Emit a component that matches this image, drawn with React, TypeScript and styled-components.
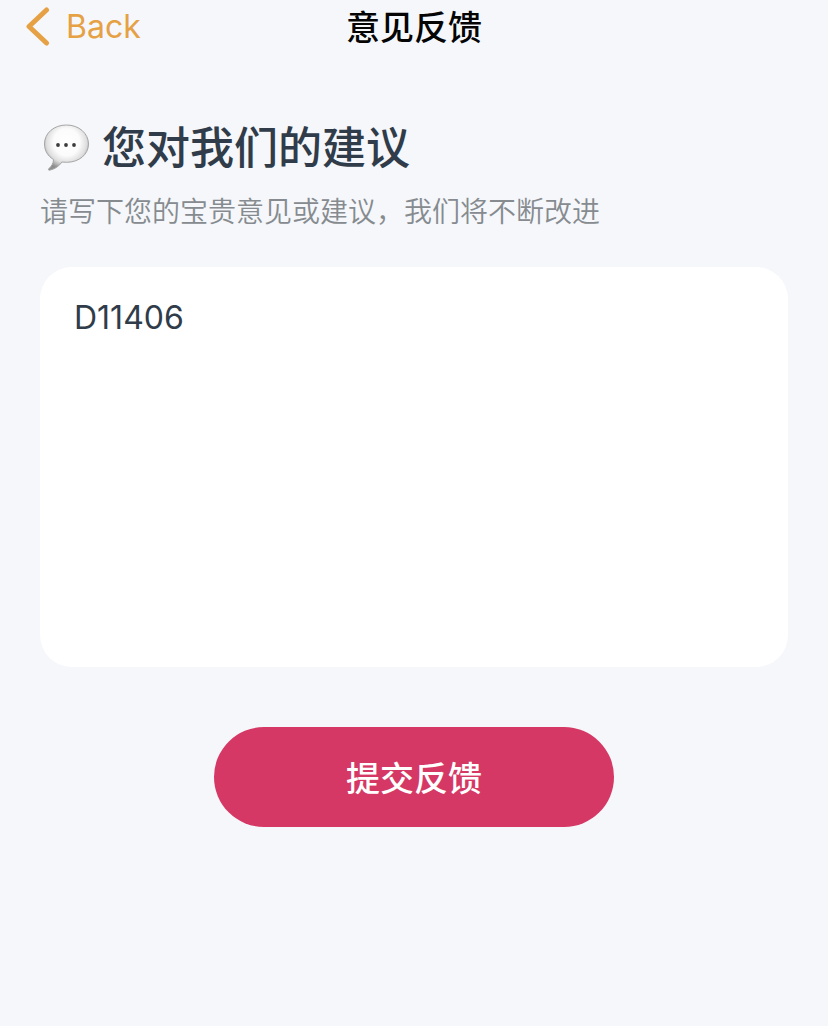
import React, { useState } from "react";
import styled, { createGlobalStyle } from "styled-components";

const GlobalStyle = createGlobalStyle`
  *, *::before, *::after { box-sizing: border-box; }
  body {
    margin: 0;
    background: #f5f7fb;
    font-family: Inter, "Noto Sans CJK SC", sans-serif;
  }
`;

const NavBar = styled.header`
  display: grid;
  grid-template-columns: 1fr auto 1fr;
  align-items: start;
  height: 54px;
  padding: 0 24px;
`;

const BackLink = styled.a`
  display: flex;
  align-items: center;
  gap: 14px;
  justify-self: start;
  color: #e5a144;
  font-size: 32px;
  line-height: 54px;
  text-decoration: none;
`;

const NavTitle = styled.h1`
  margin: 0;
  font-size: 34px;
  font-weight: 500;
  line-height: 56px;
  color: #050505;
`;

const Form = styled.form`
  display: flex;
  flex-direction: column;
  padding: 62px 40px 40px;
`;

const Heading = styled.h2`
  display: flex;
  align-items: center;
  gap: 12px;
  margin: 0;
  font-size: 44px;
  font-weight: 500;
  line-height: 64px;
  color: #303c49;
`;

const Hint = styled.p`
  margin: 10px 0 33px;
  font-size: 28px;
  font-weight: 350;
  line-height: 44px;
  color: #868b8f;
`;

const Message = styled.textarea`
  display: block;
  width: 100%;
  height: 400px;
  padding: 29px 34px;
  border: 0;
  border-radius: 32px;
  outline: none;
  resize: none;
  background: #ffffff;
  color: #303c49;
  font: inherit;
  font-size: 32px;
  line-height: 44px;
`;

const SubmitButton = styled.button`
  align-self: center;
  width: 400px;
  max-width: 100%;
  height: 100px;
  margin-top: 60px;
  padding: 0 0 2px;
  border: 0;
  border-radius: 50px;
  background: #d53864;
  color: #ffffff;
  font: inherit;
  font-size: 34px;
  font-weight: 500;
  cursor: pointer;
`;

const ChevronIcon = () => (
  <svg width="28" height="40" viewBox="0 0 28 40" fill="none" aria-hidden="true">
    <path
      d="M22.5 3 5 19.500l17.500 16.500"
      stroke="currentColor"
      strokeWidth="5"
      strokeLinecap="round"
      strokeLinejoin="round"
    />
  </svg>
);

const SpeechBubbleIcon = () => (
  <svg width="50" height="50" viewBox="0 0 50 50" aria-hidden="true">
    <defs>
      <radialGradient id="bubble" cx="0.5" cy="0.38" r="0.6">
        <stop offset="0" stopColor="#ffffff" />
        <stop offset="0.5" stopColor="#fbfbfb" />
        <stop offset="0.76" stopColor="#dedede" />
        <stop offset="1" stopColor="#8e8e8e" />
      </radialGradient>
    </defs>
    <path
      d="M26.500 2C14 2 4.500 10 4.500 21c0 6.800 3.500 12.300 9 15.500.2 3.500-2 6.800-4.700 9.200-.7.800-.2 1.700.8 1.500 5.200-1 9.700-4.200 12.300-8.200 1.500.2 3 .3 4.600.3C39 39.300 48.500 31.500 48.500 21S39 2 26.500 2Z"
      fill="url(#bubble)"
      stroke="#a6a6a6"
      strokeWidth="1"
    />
    <g fill="#3c3c3c">
      <circle cx="18" cy="22" r="1.900" />
      <circle cx="26" cy="22" r="1.900" />
      <circle cx="34" cy="22" r="1.900" />
    </g>
  </svg>
);

export default function App() {
  const [message, setMessage] = useState("D11406");

  return (
    <>
      <GlobalStyle />
      <NavBar>
        <BackLink href="#back">
          <ChevronIcon />
          Back
        </BackLink>
        <NavTitle>意见反馈</NavTitle>
      </NavBar>
      <main>
        <Form onSubmit={(event) => event.preventDefault()}>
          <Heading>
            <SpeechBubbleIcon />
            <label htmlFor="message">您对我们的建议</label>
          </Heading>
          <Hint id="message-hint">请写下您的宝贵意见或建议，我们将不断改进</Hint>
          <Message
            id="message"
            aria-describedby="message-hint"
            value={message}
            onChange={(event) => setMessage(event.target.value)}
          />
          <SubmitButton type="submit">提交反馈</SubmitButton>
        </Form>
      </main>
    </>
  );
}
